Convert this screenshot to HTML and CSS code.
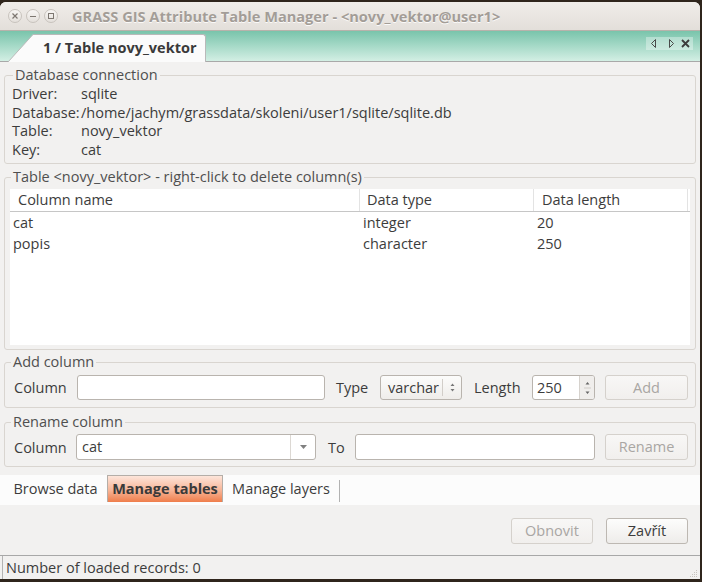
FILE: index.html
```html
<!DOCTYPE html>
<html>
<head>
<meta charset="utf-8">
<link rel="stylesheet" href="styles.css">
</head>
<body>
<div class="window">
  <div class="titlebar">
    <div class="wbtn"><svg width="8" height="8" viewBox="0 0 8 8"><path d="M1.5 1.5L6.5 6.5M6.5 1.5L1.5 6.5" stroke="#7d7771" stroke-width="1.2"/></svg></div>
    <div class="wbtn"><svg width="8" height="8" viewBox="0 0 8 8"><path d="M1 4.5H7" stroke="#7d7771" stroke-width="1.2"/></svg></div>
    <div class="wbtn last"><svg width="8" height="8" viewBox="0 0 8 8"><rect x="1.5" y="1.5" width="5" height="5" fill="none" stroke="#7d7771" stroke-width="1"/></svg></div>
    <div class="title">GRASS GIS Attribute Table Manager - &lt;novy_vektor@user1&gt;</div>
  </div>
  <div class="nbhead">
    <div class="nbtab">
      <svg class="slant" width="26" height="28" viewBox="0 0 26 28"><polygon points="0,28 25,0.5 26,0.5 26,28" fill="#fbfbfb"/><path d="M0 28L25 0.5H26" stroke="#b9b9b9" fill="none"/></svg>
      <div class="tablabel">1 / Table novy_vektor</div>
    </div>
    <div class="nbctrl">
      <svg width="47" height="13" viewBox="0 0 47 13">
        <path d="M9.5 2.5V10.5L5.5 6.5Z" fill="none" stroke="#4a4a4a" stroke-width="1"/>
        <path d="M23.5 2.5V10.5L27.5 6.5Z" fill="none" stroke="#4a4a4a" stroke-width="1"/>
        <path d="M36 3L43 10M43 3L36 10" stroke="#3c3c3c" stroke-width="1.8"/>
      </svg>
    </div>
  </div>
  <div class="content">
    <fieldset class="grp dbgrp">
      <legend>Database connection</legend>
      <div class="dbrows">
        <div>Driver:</div><div>sqlite</div>
        <div>Database:</div><div>/home/jachym/grassdata/skoleni/user1/sqlite/sqlite.db</div>
        <div>Table:</div><div>novy_vektor</div>
        <div>Key:</div><div>cat</div>
      </div>
    </fieldset>
    <fieldset class="grp tblgrp">
      <legend>Table &lt;novy_vektor&gt; - right-click to delete column(s)</legend>
      <div class="list">
        <div class="lhead">
          <div class="hc">Column name</div>
          <div class="hc">Data type</div>
          <div class="hc">Data length</div>
        </div>
        <div class="lrow"><div class="dc">cat</div><div class="dc">integer</div><div class="dc">20</div></div>
        <div class="lrow"><div class="dc">popis</div><div class="dc">character</div><div class="dc">250</div></div>
      </div>
    </fieldset>
    <fieldset class="grp addgrp">
      <legend>Add column</legend>
      <div class="addrow">
        <div class="lbl w63">Column</div>
        <div class="entry w248"></div>
        <div class="lbl w44 ml11">Type</div>
        <div class="choice">
          <span class="choicetext">varchar</span>
          <span class="choicearr"><svg width="7" height="11" viewBox="0 0 7 11"><path d="M3.5 1.5L5.5 4H1.5Z M3.5 9.5L5.5 7H1.5Z" fill="#777"/></svg></span>
        </div>
        <div class="lbl w58 ml12">Length</div>
        <div class="spin">
          <span class="spintext">250</span>
          <span class="spinbtn"><svg width="7" height="24" viewBox="0 0 7 24"><path d="M3.5 6L5.5 8.5H1.5Z M3.5 18L5.5 15.5H1.5Z" fill="#666"/><path d="M0 12H7" stroke="#d0ccc8"/></svg></span>
        </div>
        <div class="btn disabled ml10 w83">Add</div>
      </div>
    </fieldset>
    <fieldset class="grp rengrp">
      <legend>Rename column</legend>
      <div class="renrow">
        <div class="lbl w62">Column</div>
        <div class="combo">
          <span class="combotext">cat</span>
          <span class="comboarr"><svg width="9" height="6" viewBox="0 0 9 6"><path d="M1 1H8L4.5 5Z" fill="#808080"/></svg></span>
        </div>
        <div class="lbl w27 ml12">To</div>
        <div class="entry w240"></div>
        <div class="btn disabled ml10 w83">Rename</div>
      </div>
    </fieldset>
  </div>
  <div class="tabbar">
    <div class="tabstrip">
      <div class="btab w103">Browse data</div>
      <div class="btab active w116">Manage tables</div>
      <div class="btab w116">Manage layers</div>
      <div class="tabsep"></div>
    </div>
  </div>
  <div class="btnrow">
    <div class="btn disabled w82">Obnovit</div>
    <div class="btn w82 ml13">Zavřít</div>
  </div>
  <div class="status">
    <div class="statfield">Number of loaded records: 0</div>
    <svg class="grip" width="10" height="10" viewBox="0 0 10 10" fill="#c9c5c0"><rect x="8" y="2" width="1" height="1"/><rect x="6" y="4" width="1" height="1"/><rect x="8" y="4" width="1" height="1"/><rect x="4" y="6" width="1" height="1"/><rect x="6" y="6" width="1" height="1"/><rect x="8" y="6" width="1" height="1"/><rect x="2" y="8" width="1" height="1"/><rect x="4" y="8" width="1" height="1"/><rect x="6" y="8" width="1" height="1"/><rect x="8" y="8" width="1" height="1"/></svg>
  </div>
</div>
</body>
</html>
```
FILE: styles.css
```css
* { box-sizing: border-box; }
html, body { margin: 0; padding: 0; }
body {
  width: 702px;
  height: 582px;
  overflow: hidden;
  background: #2f251c;
  font-family: "Open Sans", "DejaVu Sans", sans-serif;
  font-size: 14.5px;
  color: #3c3c3c;
}
.window {
  width: 700px;
  height: 577px;
  margin-top: 2px;
  background: #f2f1f0;
  border-radius: 6px 6px 0 0;
  overflow: hidden;
  display: flex;
  flex-direction: column;
}
.titlebar {
  flex: none;
  height: 28px;
  background: linear-gradient(#f0ede9, #e3dfda);
  display: flex;
  align-items: center;
  padding-left: 8px;
}
.wbtn {
  width: 14px;
  height: 14px;
  border-radius: 50%;
  border: 1px solid #c8c3bd;
  background: linear-gradient(#f8f6f4, #e4e0db);
  display: flex;
  align-items: center;
  justify-content: center;
  margin-right: 4px;
}
.wbtn.last { margin-right: 0; }
.title {
  margin-left: 14px;
  font-weight: bold;
  font-size: 14.6px;
  color: #a39d97;
  text-shadow: 0 1px 0 #fbfaf9;
  white-space: nowrap;
}
.nbhead {
  flex: none;
  height: 32px;
  border-top: 1px solid #b8b2ab;
  border-bottom: 1px solid #a9a9a9;
  background: linear-gradient(#79c4ab, #d3efe4);
  display: flex;
  align-items: flex-start;
  padding-left: 8px;
}
.nbtab {
  margin-top: 3px;
  height: 28px;
  display: flex;
}
.slant { display: block; }
.tablabel {
  width: 172px;
  height: 28px;
  background: #fbfbfb;
  border-top: 1px solid #b9b9b9;
  border-right: 1px solid #b9b9b9;
  border-top-right-radius: 3px;
  padding-left: 9px;
  line-height: 26px;
  font-weight: bold;
  font-size: 14.5px;
  color: #3a3a3a;
  white-space: nowrap;
}
.nbctrl {
  margin-left: auto;
  margin-right: 7px;
  margin-top: 6px;
  width: 47px;
  height: 13px;
  background: rgba(255, 255, 255, 0.35);
}
.nbctrl svg { display: block; }
.content {
  flex: none;
  height: 408px;
  padding: 5px 4px 3px 4px;
  display: flex;
  flex-direction: column;
}
.grp {
  margin: 0;
  min-width: 0;
  border: 1px solid #d9d5d0;
  border-radius: 3px;
}
.grp legend {
  padding: 0 2px;
  line-height: 16px;
  height: 16px;
  color: #4f4f4f;
  white-space: nowrap;
}
.dbgrp { padding: 2px 7px 4px 7px; }
.dbgrp legend { margin-left: 1px; }
.dbrows {
  display: grid;
  grid-template-columns: 69px 1fr;
  line-height: 18.5px;
  white-space: nowrap;
}
.tblgrp { margin-top: 5px; padding: 4px 5px 4px 5px; }
.tblgrp legend { margin-left: 1px; }
.list {
  height: 156px;
  background: #ffffff;
}
.lhead {
  display: grid;
  grid-template-columns: 350px 174px 154px;
  height: 23px;
  border-bottom: 1px solid #c6c6c6;
}
.hc {
  padding-left: 8px;
  line-height: 22px;
  border-right: 1px solid #e3e3e3;
  white-space: nowrap;
}
.hc:nth-child(2) { padding-left: 7px; }
.lrow {
  display: grid;
  grid-template-columns: 350px 174px 154px;
  height: 21px;
  line-height: 21px;
}
.dc { padding-left: 3px; white-space: nowrap; }
.addgrp { margin-top: 4px; padding: 5px 7px 7px 9px; }
.addgrp legend { margin-left: -3px; }
.rengrp { margin-top: 6px; padding: 4px 7px 6px 9px; }
.rengrp legend { margin-left: -3px; }
.addrow, .renrow {
  display: flex;
  align-items: center;
  white-space: nowrap;
}
.addrow { height: 25px; }
.renrow { height: 26px; }
.lbl { flex: none; }
.w27 { width: 27px; }
.w44 { width: 44px; }
.w58 { width: 58px; }
.w62 { width: 62px; }
.w63 { width: 63px; }
.w82 { width: 82px; }
.w83 { width: 83px; }
.w103 { width: 103px; }
.w116 { width: 116px; }
.w240 { width: 240px; }
.w248 { width: 248px; }
.ml10 { margin-left: 10px; }
.ml11 { margin-left: 11px; }
.ml12 { margin-left: 12px; }
.ml13 { margin-left: 13px; }
.entry {
  flex: none;
  height: 25px;
  background: #ffffff;
  border: 1px solid #b9b4ae;
  border-radius: 3px;
}
.renrow .entry { height: 26px; }
.choice {
  flex: none;
  width: 82px;
  height: 25px;
  border: 1px solid #b9b4ae;
  border-radius: 3px;
  background: linear-gradient(#fcfcfb, #efedea);
  display: flex;
  align-items: center;
}
.choicetext { width: 62px; padding-left: 7px; border-right: 1px solid #d2cec9; line-height: 17px; }
.choicearr { flex: 1; display: flex; justify-content: center; }
.choicearr svg, .spinbtn svg, .comboarr svg { display: block; }
.spin {
  flex: none;
  width: 63px;
  height: 25px;
  border: 1px solid #b9b4ae;
  border-radius: 3px;
  background: #ffffff;
  display: flex;
  overflow: hidden;
}
.spintext { width: 46px; padding-left: 4px; line-height: 23px; }
.spinbtn {
  flex: 1;
  background: #f0eeec;
  border-left: 1px solid #d6d2cd;
  display: flex;
  justify-content: center;
  align-items: center;
}
.combo {
  flex: none;
  width: 240px;
  height: 26px;
  border: 1px solid #b9b4ae;
  border-radius: 3px;
  background: #ffffff;
  display: flex;
  align-items: center;
}
.combotext { width: 214px; padding-left: 5px; line-height: 24px; border-right: 1px solid #dcd8d3; }
.comboarr { flex: 1; display: flex; justify-content: center; }
.btn {
  flex: none;
  height: 26px;
  border: 1px solid #bdb8b2;
  border-radius: 3px;
  background: linear-gradient(#fdfdfc, #eeecea);
  text-align: center;
  line-height: 24px;
  color: #3c3c3c;
}
.addrow .btn { height: 25px; line-height: 23px; }
.btn.disabled {
  border-color: #d5d1cc;
  background: linear-gradient(#f8f7f6, #f1efed);
  color: #a9a6a3;
}
.tabbar {
  flex: none;
  height: 35px;
  padding-top: 5px;
}
.tabstrip {
  height: 30px;
  background: #fcfcfc;
  display: flex;
  align-items: flex-start;
  padding-left: 4px;
}
.btab {
  flex: none;
  height: 27px;
  line-height: 27px;
  text-align: center;
  white-space: nowrap;
}
.btab.active {
  background: linear-gradient(#fde5da, #f7b597 55%, #ef7d4b);
  border: 1px solid #b4aea8;
  border-bottom: none;
  font-weight: bold;
  color: #3a3a3a;
  line-height: 26px;
}
.tabsep {
  width: 1px;
  height: 22px;
  margin-top: 5px;
  background: #b2b2b2;
}
.btnrow {
  flex: none;
  height: 50px;
  display: flex;
  justify-content: flex-end;
  padding: 13px 12px 0 0;
}
.status {
  flex: none;
  height: 24px;
  border-top: 1px solid #a8a8a8;
  display: flex;
  padding-left: 2px;
  position: relative;
}
.statfield {
  border-left: 1px solid #b3b3b3;
  padding-left: 3px;
  line-height: 23px;
  white-space: nowrap;
}
.grip {
  position: absolute;
  right: 2px;
  bottom: 1px;
}
```
